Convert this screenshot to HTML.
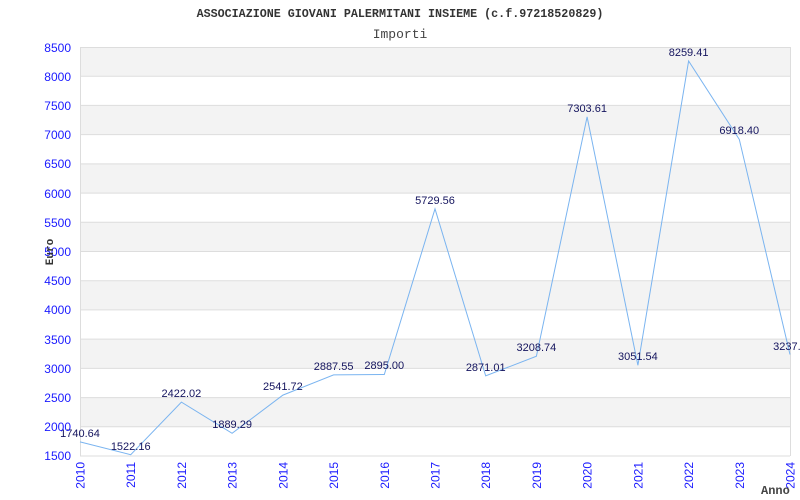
<!DOCTYPE html><html><head><style>body{margin:0;background:#fff}</style></head><body>
<svg width="800" height="500" xmlns="http://www.w3.org/2000/svg" style="display:block">
<g fill="#f3f3f3">
<rect x="80" y="47" width="710" height="29.2"/><rect x="80" y="105.4" width="710" height="29.2"/><rect x="80" y="163.9" width="710" height="29.2"/><rect x="80" y="222.3" width="710" height="29.2"/><rect x="80" y="280.7" width="710" height="29.2"/><rect x="80" y="339.1" width="710" height="29.2"/><rect x="80" y="397.6" width="710" height="29.2"/>
</g>
<g stroke="#dddddd" stroke-width="1">
<line x1="80" x2="790" y1="47.5" y2="47.5"/><line x1="80" x2="790" y1="76.2" y2="76.2"/><line x1="80" x2="790" y1="105.4" y2="105.4"/><line x1="80" x2="790" y1="134.6" y2="134.6"/><line x1="80" x2="790" y1="163.9" y2="163.9"/><line x1="80" x2="790" y1="193.1" y2="193.1"/><line x1="80" x2="790" y1="222.3" y2="222.3"/><line x1="80" x2="790" y1="251.5" y2="251.5"/><line x1="80" x2="790" y1="280.7" y2="280.7"/><line x1="80" x2="790" y1="309.9" y2="309.9"/><line x1="80" x2="790" y1="339.1" y2="339.1"/><line x1="80" x2="790" y1="368.4" y2="368.4"/><line x1="80" x2="790" y1="397.6" y2="397.6"/><line x1="80" x2="790" y1="426.8" y2="426.8"/><line x1="80" x2="790" y1="456" y2="456"/>
<line x1="80.5" x2="80.5" y1="47" y2="456"/><line x1="790.5" x2="790.5" y1="47" y2="456"/>
</g>
<polyline fill="none" stroke="#7ab4f0" stroke-width="1" points="80,441.9 130.7,454.7 181.4,402.1 232.1,433.3 282.9,395.1 333.6,374.9 384.3,374.5 435,208.9 485.7,375.9 536.4,356.2 587.1,116.9 637.9,365.3 688.6,61 739.3,139.4 790,354.5"/>
<g font-family="Liberation Sans, sans-serif" font-size="11" fill="#14145e" text-anchor="middle">
<text x="80" y="437">1740.64</text><text x="130.7" y="450">1522.16</text><text x="181.4" y="397">2422.02</text><text x="232.1" y="428">1889.29</text><text x="282.9" y="390">2541.72</text><text x="333.6" y="370">2887.55</text><text x="384.3" y="369">2895.00</text><text x="435" y="204">5729.56</text><text x="485.7" y="371">2871.01</text><text x="536.4" y="351">3208.74</text><text x="587.1" y="112">7303.61</text><text x="637.9" y="360">3051.54</text><text x="688.6" y="56">8259.41</text><text x="739.3" y="134">6918.40</text><text x="790" y="350">3237.0</text>
</g>
<g font-family="Liberation Sans, sans-serif" font-size="12" fill="#1a1aff" text-anchor="end">
<text x="71" y="52">8500</text><text x="71" y="81">8000</text><text x="71" y="110">7500</text><text x="71" y="139">7000</text><text x="71" y="168">6500</text><text x="71" y="198">6000</text><text x="71" y="227">5500</text><text x="71" y="256">5000</text><text x="71" y="285">4500</text><text x="71" y="314">4000</text><text x="71" y="344">3500</text><text x="71" y="373">3000</text><text x="71" y="402">2500</text><text x="71" y="431">2000</text><text x="71" y="460">1500</text>
</g>
<g font-family="Liberation Sans, sans-serif" font-size="12" fill="#1a1aff" text-anchor="end">
<text transform="translate(84.5,462) rotate(-90)">2010</text><text transform="translate(135.2,462) rotate(-90)">2011</text><text transform="translate(185.9,462) rotate(-90)">2012</text><text transform="translate(236.6,462) rotate(-90)">2013</text><text transform="translate(287.4,462) rotate(-90)">2014</text><text transform="translate(338.1,462) rotate(-90)">2015</text><text transform="translate(388.8,462) rotate(-90)">2016</text><text transform="translate(439.5,462) rotate(-90)">2017</text><text transform="translate(490.2,462) rotate(-90)">2018</text><text transform="translate(540.9,462) rotate(-90)">2019</text><text transform="translate(591.6,462) rotate(-90)">2020</text><text transform="translate(642.4,462) rotate(-90)">2021</text><text transform="translate(693.1,462) rotate(-90)">2022</text><text transform="translate(743.8,462) rotate(-90)">2023</text><text transform="translate(794.5,462) rotate(-90)">2024</text>
</g>
<text x="400" y="17" text-anchor="middle" font-family="Liberation Mono, monospace" font-weight="bold" font-size="11.7" fill="#333">ASSOCIAZIONE GIOVANI PALERMITANI INSIEME (c.f.97218520829)</text>
<text x="400" y="38" text-anchor="middle" font-family="Liberation Mono, monospace" font-size="13" fill="#444">Importi</text>
<text transform="translate(53,252) rotate(-90)" text-anchor="middle" font-family="Liberation Mono, monospace" font-weight="bold" font-size="11" fill="#333">Euro</text>
<text x="761" y="494" font-family="Liberation Mono, monospace" font-weight="bold" font-size="12" fill="#444">Anno</text>
</svg>
</body></html>
